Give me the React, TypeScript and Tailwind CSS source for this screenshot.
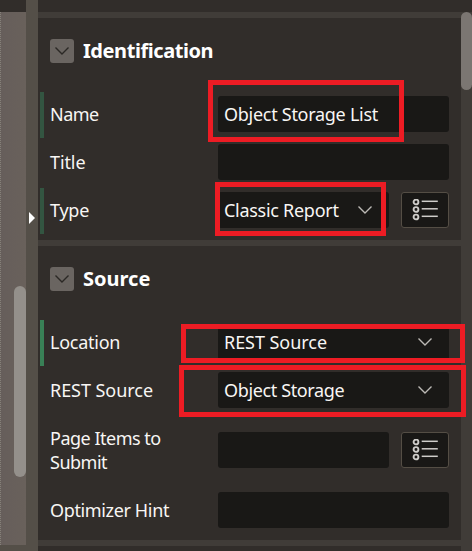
import type { ReactNode } from 'react';

function Chevron({ className }: { className: string }) {
  return (
    <svg viewBox="0 0 14 8" className={className} fill="none" stroke="currentColor">
      <path d="M0.5 0.5 7 7 13.5 0.5" strokeWidth="1.4" />
    </svg>
  );
}

function ListButton() {
  return (
    <button className="ml-3 flex h-9 w-12 items-center justify-center rounded-[3px] border border-[#544e45] bg-[#191816]">
      <svg width="26" height="22" viewBox="0 0 26 22" fill="none" stroke="#cfcdca">
        {[3, 10.5, 18].map((y) => (
          <g key={y}>
            <circle cx="4" cy={y} r="2.4" strokeWidth="1.9" />
            <path d={`M9.7 ${y - 0.7}H25.8`} strokeWidth="1.5" />
          </g>
        ))}
      </svg>
    </button>
  );
}

function Section({ title, spacing, children }: { title: string; spacing: string; children: ReactNode }) {
  return (
    <section className="border-b-6 border-[#403c38] bg-[#312d2a] pb-1.5">
      <header className="mb-1.5 flex h-[66px] items-center pl-3">
        <button className="flex size-6 items-center justify-center rounded-[3px] bg-[#6a6561] text-[#2b2825]">
          <Chevron className="h-2 w-3.5" />
        </button>
        <h2 className={`ml-[9px] text-[20px] leading-[30px] font-bold whitespace-nowrap text-white ${spacing}`}>{title}</h2>
      </header>
      {children}
    </section>
  );
}

type RowProps = {
  label: ReactNode;
  value?: string;
  select?: boolean;
  list?: boolean;
  tall?: boolean;
  mark?: string;
  labelSpacing: string;
  valueSpacing?: string;
};

function Row({ label, value, select, list, tall, mark = 'bg-transparent', labelSpacing, valueSpacing = '' }: RowProps) {
  return (
    <div className={`flex items-center pr-3 pl-0.5 ${tall ? 'h-[72px]' : 'h-12'}`}>
      <span className={`mt-0.5 h-[46px] w-1 shrink-0 ${mark}`} />
      <label className={`ml-1.5 w-[168px] shrink-0 text-[18px] leading-6 whitespace-nowrap ${labelSpacing}`}>{label}</label>
      <div className="flex h-9 flex-1 items-center justify-between rounded-[3px] bg-[#191816] pr-[17px] pl-1.5">
        <span className={`text-[18px] leading-6 whitespace-nowrap ${valueSpacing}`}>{value}</span>
        {select && <Chevron className="mb-px h-2 w-3.5 text-[#bcb9b5]" />}
      </div>
      {list && <ListButton />}
    </div>
  );
}

export default function App() {
  return (
    <div className="relative flex h-[551px] w-[472px] overflow-hidden bg-[#312d2a] font-['Noto_Sans','Open_Sans',sans-serif] text-[#f8f6f4]">
      <aside className="flex h-full w-[26px] shrink-0 flex-col bg-[#544f48]">
        <div className="h-3 shrink-0 bg-[#312d2a]" />
        <div className="flex h-[533px] justify-end border-l border-dotted border-[#85807b] bg-linear-to-r from-[#665e5b] to-[#69615b]">
          <div className="mt-[274px] h-[191px] w-3 rounded-full bg-[#94908b]" />
        </div>
      </aside>
      <div className="flex h-full w-3 shrink-0 bg-[#544f48] pt-[212px] pl-[3px]">
        <svg width="6" height="12" viewBox="0 0 6 12" fill="#fff">
          <path d="M0 0 6 6 0 12Z" />
        </svg>
      </div>
      <main className="flex h-full w-[423px] shrink-0 flex-col">
        <div className="h-[18px] shrink-0 border-b-6 border-[#403c38]" />
        <Section title="Identification" spacing="tracking-[-0.43px]">
          <Row label="Name" value="Object Storage List" mark="bg-[#335541]" labelSpacing="tracking-[-0.5px]" valueSpacing="tracking-[-0.28px]" />
          <Row label="Title" labelSpacing="tracking-[-0.1px]" />
          <Row label="Type" value="Classic Report" select list mark="bg-[#335541]" labelSpacing="tracking-[-0.25px]" valueSpacing="tracking-[-0.28px]" />
        </Section>
        <Section title="Source" spacing="tracking-[0px]">
          <Row label="Location" value="REST Source" select mark="bg-[#398056]" labelSpacing="tracking-[-0.25px]" valueSpacing="tracking-[-0.05px]" />
          <Row label="REST Source" value="Object Storage" select labelSpacing="tracking-[-0.05px]" valueSpacing="tracking-[-0.37px]" />
          <Row label={<>Page Items to<br />Submit</>} list tall labelSpacing="tracking-[-0.5px]" />
          <Row label="Optimizer Hint" labelSpacing="tracking-[-0.36px]" />
        </Section>
      </main>
      <div className="h-full w-[11px] shrink-0 pt-3">
        <div className="h-full bg-[#403c38]">
          <div className="h-[78px] w-full rounded-full bg-[#7b7672]" />
        </div>
      </div>
      <div className="absolute top-[80px] left-[208px] h-[62px] w-[196px] border-5 border-[#ed1c24]" />
      <div className="absolute top-[182px] left-[215px] h-[54px] w-[171px] border-5 border-[#ed1c24]" />
      <div className="absolute top-[324px] left-[181px] h-[39px] w-[284px] border-5 border-[#ed1c24]" />
      <div className="absolute top-[365px] left-[179px] h-[52px] w-[287px] border-5 border-[#ed1c24]" />
    </div>
  );
}
